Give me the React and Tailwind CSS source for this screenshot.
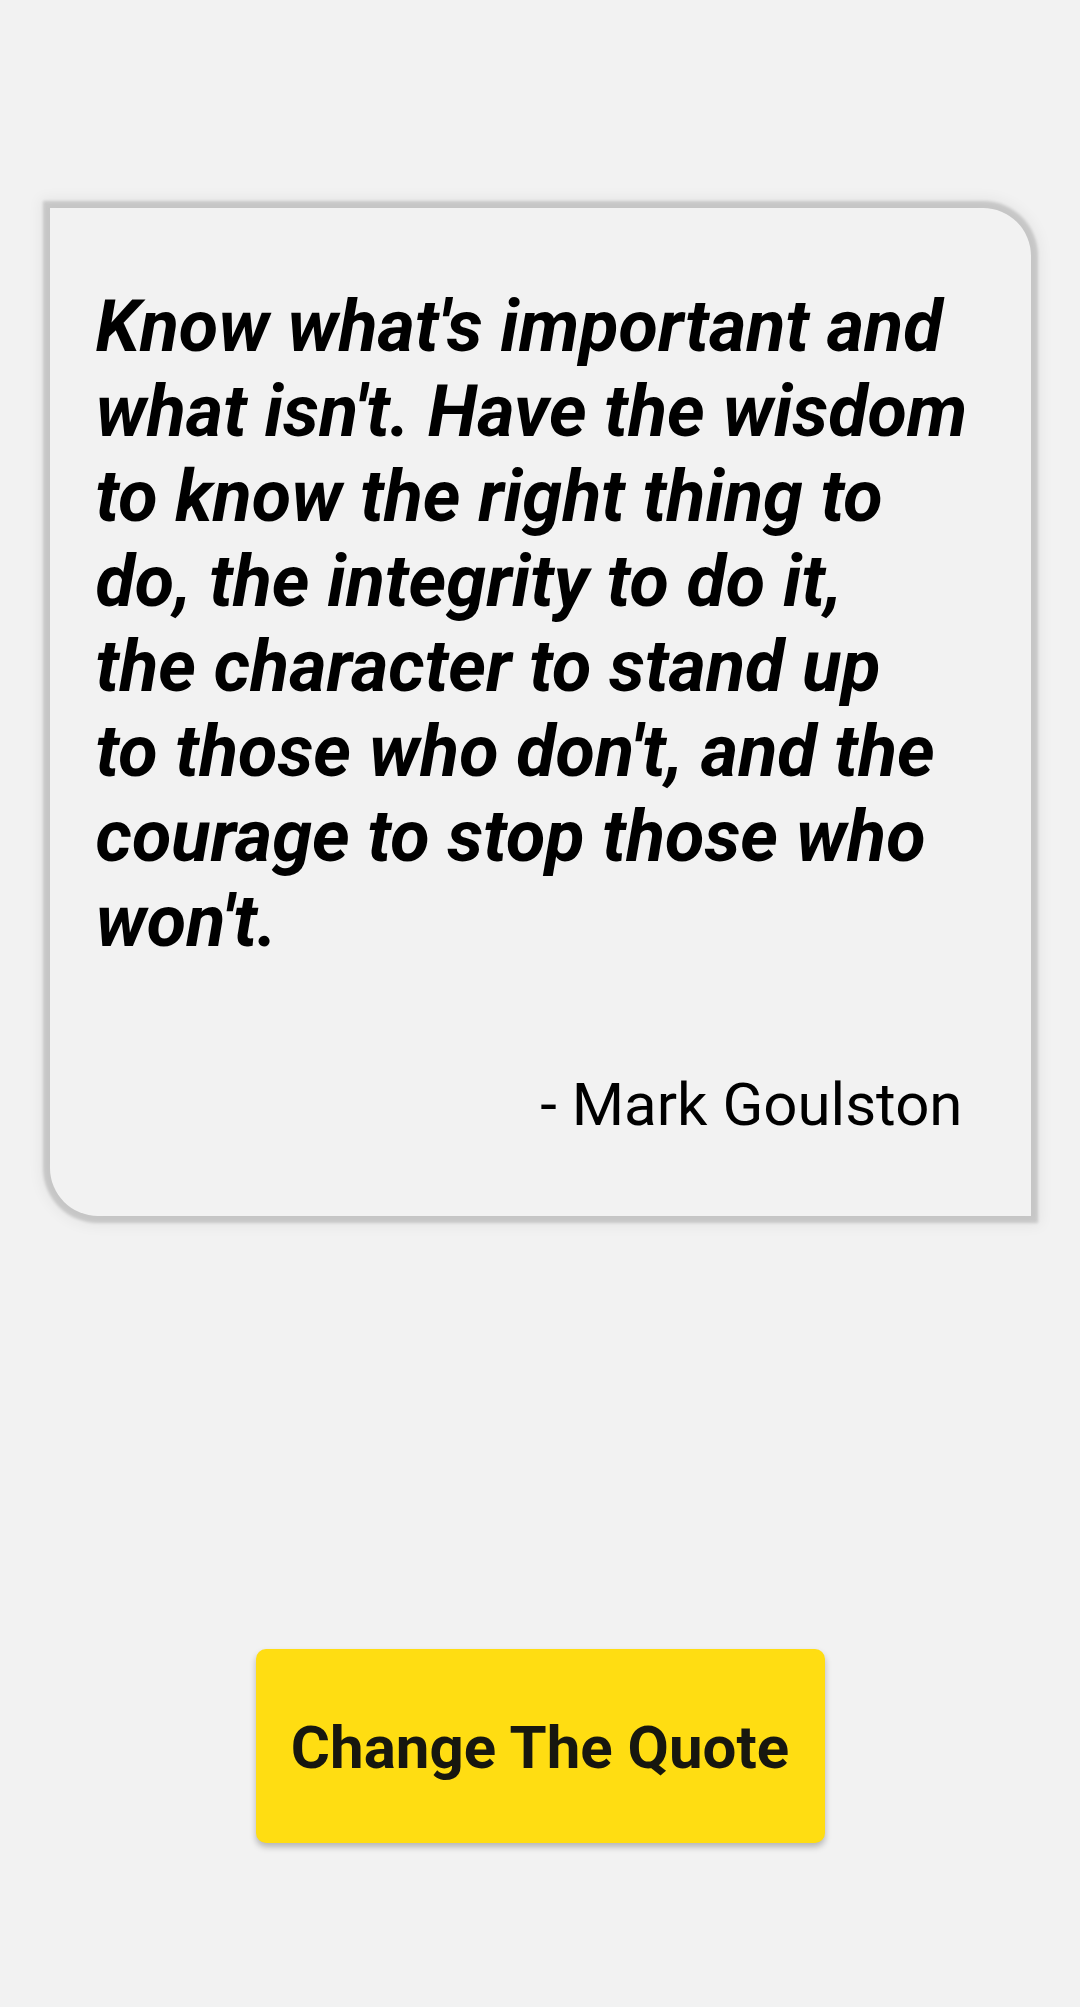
export default function App() {
  const lines = [
    "Know what's important and",
    "what isn't. Have the wisdom",
    "to know the right thing to",
    "do, the integrity to do it,",
    "the character to stand up",
    "to those who don't, and the",
    "courage to stop those who",
    "won't.",
  ];
  return (
    <div
      className="min-h-[2007px] w-full bg-[#f2f2f2] flex flex-col items-center"
      style={{ fontFamily: "Roboto, 'Noto Sans', sans-serif" }}
    >
      <div className="mt-[208px] w-[981px] h-[1008px] bg-[#f2f2f2] rounded-tr-[48px] rounded-bl-[48px] shadow-[0_0_3px_7px_rgba(0,0,0,0.14),0_0_14px_10px_rgba(0,0,0,0.05)] flex flex-col pl-[46px] pr-[20px] pt-[76px]">
        <p className="text-[72px] leading-[85px] font-bold italic text-black whitespace-nowrap">
          {lines.map((l, i) => (
            <span key={i} className="block">
              {l}
            </span>
          ))}
        </p>
        <p className="mt-[106px] self-end mr-[48px] text-[60px] leading-[70px] font-normal text-black">
          - Mark Goulston
        </p>
      </div>
      <button className="mt-[433px] w-[569px] h-[194px] pt-[4px] rounded-[10px] bg-[#ffdd12] shadow-[0_4px_6px_rgba(0,0,0,0.25)] text-[60px] font-bold text-[#17170f] flex items-center justify-center">
        Change The Quote
      </button>
    </div>
  );
}
